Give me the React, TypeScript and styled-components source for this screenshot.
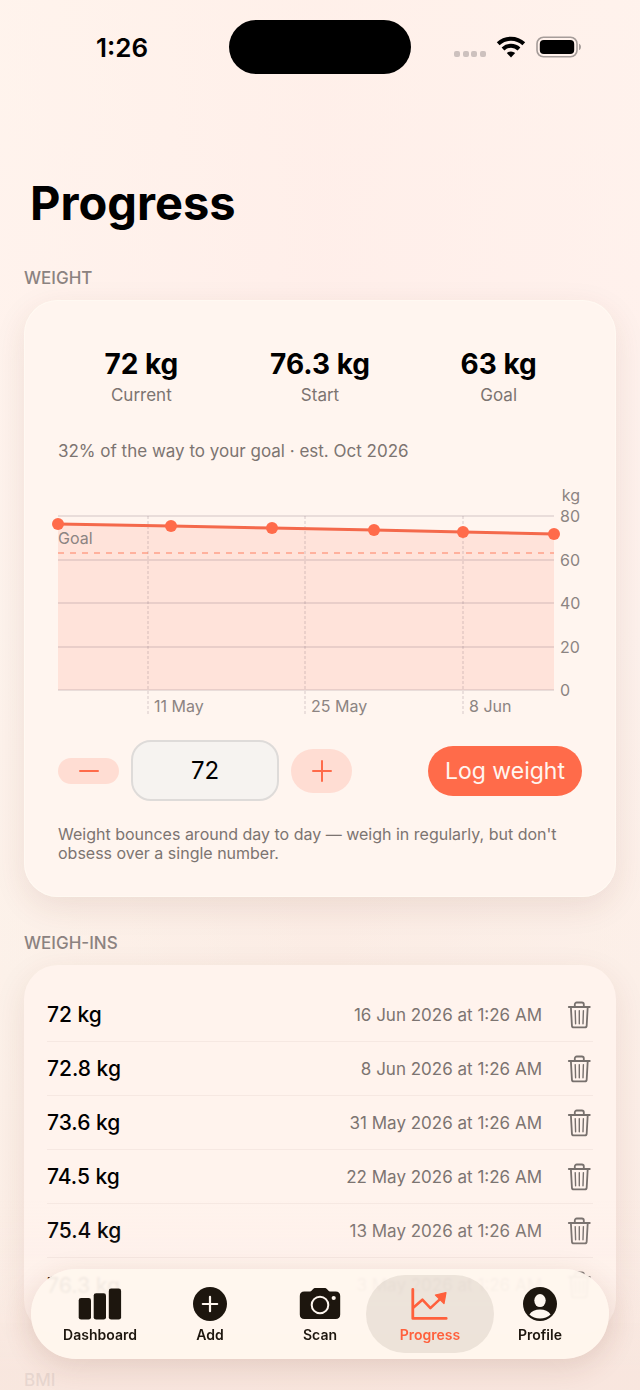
import React, { useState } from "react";
import styled, { createGlobalStyle } from "styled-components";

const accent = "#ff6b4a";

const weighIns = [
  { weight: "72 kg", date: "16 Jun 2026 at 1:26 AM" },
  { weight: "72.8 kg", date: "8 Jun 2026 at 1:26 AM" },
  { weight: "73.6 kg", date: "31 May 2026 at 1:26 AM" },
  { weight: "74.5 kg", date: "22 May 2026 at 1:26 AM" },
  { weight: "75.4 kg", date: "13 May 2026 at 1:26 AM" },
  { weight: "76.3 kg", date: "3 May 2026 at 1:26 AM" },
];

const stats = [
  { value: "72 kg", label: "Current" },
  { value: "76.3 kg", label: "Start" },
  { value: "63 kg", label: "Goal" },
];

const points = [
  [0, 38],
  [113, 40],
  [214, 42],
  [316, 44],
  [405, 46],
  [496, 48],
];

const yTicks = [
  { y: 30, label: "80" },
  { y: 74, label: "60" },
  { y: 117, label: "40" },
  { y: 161, label: "20" },
  { y: 204, label: "0" },
];

const xTicks = [
  { x: 90, label: "11 May" },
  { x: 247, label: "25 May" },
  { x: 405, label: "8 Jun" },
];

function StatusIcons() {
  return (
    <svg width="128" height="24" viewBox="0 0 128 24" aria-hidden="true">
      <g fill="#cdc1be">
        <rect x="1" y="16" width="6" height="6" rx="2" />
        <rect x="10" y="16" width="6" height="6" rx="2" />
        <rect x="18" y="16" width="6" height="6" rx="2" />
        <rect x="27" y="16" width="6" height="6" rx="2" />
      </g>
      <g fill="none" stroke="#000" strokeWidth="4">
        <path d="M45.2 8.8a18.5 18.5 0 0 1 25.6 0" />
        <path d="M50 14a11.6 11.6 0 0 1 16 0" />
      </g>
      <path d="M58 22.4l-4.200-4.300a6 6 0 0 1 8.400 0z" fill="#000" />
      <rect x="84" y="2.200" width="40" height="19.600" rx="6.500" fill="none" stroke="#a59c99" strokeWidth="1.600" />
      <rect x="86.800" y="5" width="34.400" height="14" rx="4" fill="#000" />
      <path d="M126 8.800c2.600.8 2.600 5.400 0 6.200z" fill="#a59c99" />
    </svg>
  );
}

function TrashIcon() {
  return (
    <svg width="24" height="28" viewBox="0 0 24 28" fill="none" stroke="#77706d" strokeLinecap="round" strokeLinejoin="round" aria-hidden="true">
      <path d="M1.800 6h21" strokeWidth="1.800" />
      <path d="M7.800 6V3.400a1.900 1.900 0 0 1 1.900-1.900h5.200a1.900 1.900 0 0 1 1.900 1.900V6" strokeWidth="1.800" />
      <path d="M3.900 6.200l1 18.200a2 2 0 0 0 2 2h10.800a2 2 0 0 0 2-2l1-18.200" strokeWidth="1.800" />
      <path d="M8.200 9.600l.4 13.200M12.300 9.600v13.200M16.400 9.600l-.4 13.200" strokeWidth="1.400" />
    </svg>
  );
}

function DashboardIcon() {
  return (
    <svg width="44" height="34" viewBox="0 0 44 34" fill="currentColor" aria-hidden="true">
      <rect x="0.7" y="11" width="12.3" height="21.6" rx="2.4" />
      <rect x="15.7" y="6.2" width="12.3" height="26.4" rx="2.4" />
      <rect x="30.8" y="1.5" width="12.3" height="31.1" rx="2.4" />
    </svg>
  );
}

function AddIcon() {
  return (
    <svg width="44" height="34" viewBox="0 0 44 34" aria-hidden="true">
      <circle cx="22" cy="17" r="17" fill="currentColor" />
      <path d="M22 9.800v14.400M14.800 17h14.400" stroke="#fff7ef" strokeWidth="2.200" strokeLinecap="round" />
    </svg>
  );
}

function ScanIcon() {
  return (
    <svg width="44" height="34" viewBox="0 0 44 34" aria-hidden="true">
      <path
        d="M6.300 4.600h5.200c1 0 1.600-.3 2.200-1l1.200-1.300C15.600 1.500 16.400 1 17.600 1h8.800c1.200 0 2 .5 2.700 1.300l1.200 1.300c.6.7 1.200 1 2.200 1h5.200c2.900 0 4.500 1.600 4.500 4.500v18.500c0 2.900-1.600 4.500-4.500 4.500H6.300c-2.900 0-4.500-1.600-4.500-4.500V9.100c0-2.900 1.600-4.500 4.500-4.500z"
        fill="currentColor"
      />
      <circle cx="22" cy="18" r="8.300" fill="none" stroke="#fff7ef" strokeWidth="2" />
      <circle cx="35.700" cy="11" r="2.100" fill="#fff7ef" />
    </svg>
  );
}

function ProgressIcon() {
  return (
    <svg width="44" height="34" viewBox="0 0 44 34" fill="none" stroke="currentColor" strokeLinecap="round" strokeLinejoin="round" aria-hidden="true">
      <path d="M4.800 2.400v29h33.400" strokeWidth="2.800" />
      <path d="M5.800 20.300l8.600-7.600 8 8.400 9.600-9" strokeWidth="2.600" />
      <path d="M27.400 8l10.600-2.400-2 11z" fill="currentColor" strokeWidth="1.200" />
    </svg>
  );
}

function ProfileIcon() {
  return (
    <svg width="44" height="34" viewBox="0 0 44 34" aria-hidden="true">
      <circle cx="22" cy="17" r="17" fill="currentColor" />
      <ellipse cx="22" cy="13.600" rx="5.700" ry="6.500" fill="#fff7ef" />
      <path d="M11.400 27.500c2-3.300 6-5 10.600-5s8.600 1.700 10.600 5c-2.700 2.600-6.400 4.100-10.600 4.100s-7.900-1.500-10.600-4.100z" fill="#fff7ef" />
    </svg>
  );
}

const tabs = [
  { label: "Dashboard", icon: <DashboardIcon /> },
  { label: "Add", icon: <AddIcon /> },
  { label: "Scan", icon: <ScanIcon /> },
  { label: "Progress", icon: <ProgressIcon /> },
  { label: "Profile", icon: <ProfileIcon /> },
];

function WeightChart() {
  const line = points.map(([x, y]) => `${x},${y}`).join(" ");

  return (
    <Chart viewBox="0 0 524 230" role="img" aria-label="Weight over time in kg">
      <polygon points={`0,204 ${line} 496,204`} fill={accent} fillOpacity="0.13" />
      {yTicks.map(({ y, label }) => (
        <g key={label}>
          <line x1="0" x2="496" y1={y} y2={y} stroke="#786473" strokeOpacity="0.16" strokeWidth="2" />
          <text x="502" y={y + 6}>
            {label}
          </text>
        </g>
      ))}
      {xTicks.map(({ x, label }) => (
        <g key={label}>
          <line x1={x} x2={x} y1="30" y2="230" stroke="#786473" strokeOpacity="0.3" strokeWidth="1" strokeDasharray="3 2" />
          <text x={x + 6} y="226">
            {label}
          </text>
        </g>
      ))}
      <line x1="0" x2="496" y1="67" y2="67" stroke={accent} strokeOpacity="0.42" strokeWidth="2" strokeDasharray="6 6" />
      <text x="0" y="58">
        Goal
      </text>
      <text x="522" y="15" textAnchor="end">
        kg
      </text>
      <polyline points={line} fill="none" stroke="#f4694b" strokeWidth="3" />
      {points.map(([x, y]) => (
        <circle key={x} cx={x} cy={y} r="6" fill={accent} />
      ))}
    </Chart>
  );
}

function App() {
  const [weight, setWeight] = useState("72");
  const [active, setActive] = useState("Progress");

  const step = (by: number) => {
    setWeight(String(Math.round((Number(weight) + by) * 10) / 10));
  };

  return (
    <Page>
      <GlobalStyle />
      <StatusBar>
        <Clock>1:26</Clock>
        <Island />
        <StatusRight>
          <StatusIcons />
        </StatusRight>
      </StatusBar>

      <Main>
        <Title>Progress</Title>

        <SectionTitle>WEIGHT</SectionTitle>
        <WeightCard>
          <Stats>
            {stats.map(({ value, label }) => (
              <Stat key={label}>
                <dt>{label}</dt>
                <dd>{value}</dd>
              </Stat>
            ))}
          </Stats>
          <Summary>32% of the way to your goal · est. Oct 2026</Summary>
          <WeightChart />
          <Controls>
            <StepButton $height="26px" type="button" aria-label="Decrease weight" onClick={() => step(-0.1)}>
              <svg width="22" height="22" viewBox="0 0 22 22" aria-hidden="true">
                <path d="M2 11h18" />
              </svg>
            </StepButton>
            <WeightInput
              aria-label="Weight in kg"
              inputMode="decimal"
              value={weight}
              onChange={(e) => setWeight(e.target.value)}
            />
            <StepButton $height="44px" type="button" aria-label="Increase weight" onClick={() => step(0.1)}>
              <svg width="22" height="22" viewBox="0 0 22 22" aria-hidden="true">
                <path d="M2 11h18M11 1v20" />
              </svg>
            </StepButton>
            <LogButton type="button">Log weight</LogButton>
          </Controls>
          <Note>
            Weight bounces around day to day — weigh in regularly, but don't
            obsess over a single number.
          </Note>
        </WeightCard>

        <SectionTitle>WEIGH-INS</SectionTitle>
        <ListCard>
          {weighIns.map((item) => (
            <Row key={item.date}>
              <strong>{item.weight}</strong>
              <time>{item.date}</time>
              <DeleteButton type="button" aria-label={`Delete ${item.weight}`}>
                <TrashIcon />
              </DeleteButton>
            </Row>
          ))}
        </ListCard>

        <SectionTitle>BMI</SectionTitle>
      </Main>

      <BottomFade />
      <TabBar>
        {tabs.map(({ label, icon }) => (
          <Tab
            key={label}
            type="button"
            $active={active === label}
            aria-current={active === label ? "page" : undefined}
            onClick={() => setActive(label)}
          >
            {icon}
            <span>{label}</span>
          </Tab>
        ))}
      </TabBar>
    </Page>
  );
}

const GlobalStyle = createGlobalStyle`
  * {
    box-sizing: border-box;
  }
  body {
    margin: 0;
    background: #f9e9e1;
    color: #000;
    font-family: Inter, "Liberation Sans", sans-serif;
  }
  button, input {
    font: inherit;
    margin: 0;
  }
`;

const Page = styled.div`
  min-height: 100vh;
  background: linear-gradient(
      90deg,
      rgba(255, 246, 238, 0.5),
      rgba(255, 236, 228, 0.2) 50%,
      rgba(255, 244, 238, 0.4)
    ),
    linear-gradient(#fff1eb, #ffefeb 20%, #fcefea 45%, #faece4 70%, #f9e5dd);
`;

const StatusBar = styled.header`
  display: grid;
  grid-template-columns: 1fr 182px 1fr;
  align-items: center;
  padding-top: 20px;
`;

const Clock = styled.div`
  padding-left: 15px;
  font-size: 26px;
  font-weight: 600;
  text-align: center;
`;

const Island = styled.div`
  height: 54px;
  border-radius: 27px;
  background: #000;
`;

const StatusRight = styled.div`
  display: flex;
  justify-content: center;
  padding-right: 18px;
`;

const Main = styled.main`
  padding: 100px 24px 0;
`;

const Title = styled.h1`
  margin: 0 6px;
  font-size: 47px;
  font-weight: 700;
  line-height: 58px;
`;

const SectionTitle = styled.h2`
  margin: 36px 0 12px;
  color: #8b8280;
  font-size: 17px;
  font-weight: 500;
  line-height: 20px;

  &:last-child {
    margin-bottom: 0;
  }
`;

const WeightCard = styled.section`
  padding: 47px 34px 34px;
  border-radius: 34px;
  background: #fff5ef;
  box-shadow: 0 10px 32px rgba(110, 50, 30, 0.1), inset 0 0 0 1px rgba(255, 250, 243, 0.8);
`;

const Stats = styled.dl`
  display: grid;
  grid-template-columns: repeat(3, 1fr);
  gap: 12px;
  margin: 0;
`;

const Stat = styled.div`
  display: flex;
  flex-direction: column-reverse;
  gap: 4px;
  text-align: center;
  dt {
    color: #7c7471;
    font-size: 17px;
    line-height: 20px;
  }
  dd {
    margin: 0;
    font-size: 28px;
    font-weight: 700;
    line-height: 34px;
  }
`;

const Summary = styled.p`
  margin: 36px 0 25px;
  color: #7c7471;
  font-size: 17px;
  line-height: 20px;
`;

const Chart = styled.svg`
  display: block;
  width: 100%;
  overflow: visible;
  text {
    fill: #8c8482;
    font-size: 16px;
  }
`;

const Controls = styled.div`
  display: flex;
  align-items: center;
  gap: 12px;
  margin-top: 24px;
`;

const StepButton = styled.button<{ $height: string }>`
  display: flex;
  align-items: center;
  justify-content: center;
  width: 61px;
  height: ${({ $height }) => $height};
  padding: 0;
  border: 0;
  border-radius: 22px;
  background: #ffddd3;
  cursor: pointer;
  path {
    stroke: ${accent};
    stroke-width: 2;
    stroke-linecap: round;
  }
`;

const WeightInput = styled.input`
  width: 148px;
  height: 61px;
  padding: 0;
  border: 2px solid #dedbd9;
  border-radius: 20px;
  background: #f6f3f0;
  color: #000;
  font-size: 24px;
  text-align: center;
`;

const LogButton = styled.button`
  height: 50px;
  margin-left: auto;
  padding: 0 17px;
  border: 0;
  border-radius: 25px;
  background: ${accent};
  color: #fff5ef;
  font-size: 23px;
  white-space: nowrap;
  cursor: pointer;
`;

const Note = styled.p`
  margin: 24px 0 0;
  color: #7c7471;
  font-size: 16px;
  line-height: 19px;
`;

const ListCard = styled.ul`
  margin: 0;
  padding: 23px 23px 22px;
  border-radius: 34px;
  background: #fff3ed;
  box-shadow: 0 10px 32px rgba(110, 50, 30, 0.1);
  list-style: none;
`;

const Row = styled.li`
  display: flex;
  align-items: center;
  height: 54px;
  border-bottom: 1px solid #f6e8e2;
  &:last-child {
    border-bottom: 0;
  }
  strong {
    font-size: 21px;
    font-weight: 500;
  }
  time {
    margin-left: auto;
    color: #7c7471;
    font-size: 17px;
  }
`;

const DeleteButton = styled.button`
  display: flex;
  margin-left: 25px;
  padding: 0 2px 0 0;
  border: 0;
  background: none;
  cursor: pointer;
`;

const BottomFade = styled.div`
  position: fixed;
  right: 0;
  bottom: 0;
  left: 0;
  height: 190px;
  background: linear-gradient(
    rgba(247, 229, 221, 0),
    rgba(247, 229, 221, 0.1) 40%,
    rgba(247, 229, 221, 0.85) 90%
  );
  pointer-events: none;
`;

const TabBar = styled.nav`
  position: fixed;
  right: 31px;
  bottom: 31px;
  left: 31px;
  display: flex;
  padding: 6px 14px;
  border-radius: 45px;
  background: rgba(255, 247, 238, 0.94);
  box-shadow: 0 8px 30px rgba(110, 50, 30, 0.14);
  backdrop-filter: blur(1px);
`;

const Tab = styled.button<{ $active: boolean }>`
  position: relative;
  display: flex;
  flex: 1;
  flex-direction: column;
  align-items: center;
  gap: 4px;
  height: 78px;
  padding: 12px 0 0;
  border: 0;
  background: none;
  color: ${({ $active }) => ($active ? "#ff603c" : "#1d160e")};
  font-size: 14px;
  font-weight: 600;
  line-height: 20px;
  cursor: pointer;
  &::before {
    content: "";
    position: absolute;
    inset: 0 -9px;
    border-radius: 39px;
    background: ${({ $active }) => ($active ? "rgba(80, 60, 40, 0.1)" : "none")};
  }
  svg,
  span {
    position: relative;
  }
`;

export default App;
